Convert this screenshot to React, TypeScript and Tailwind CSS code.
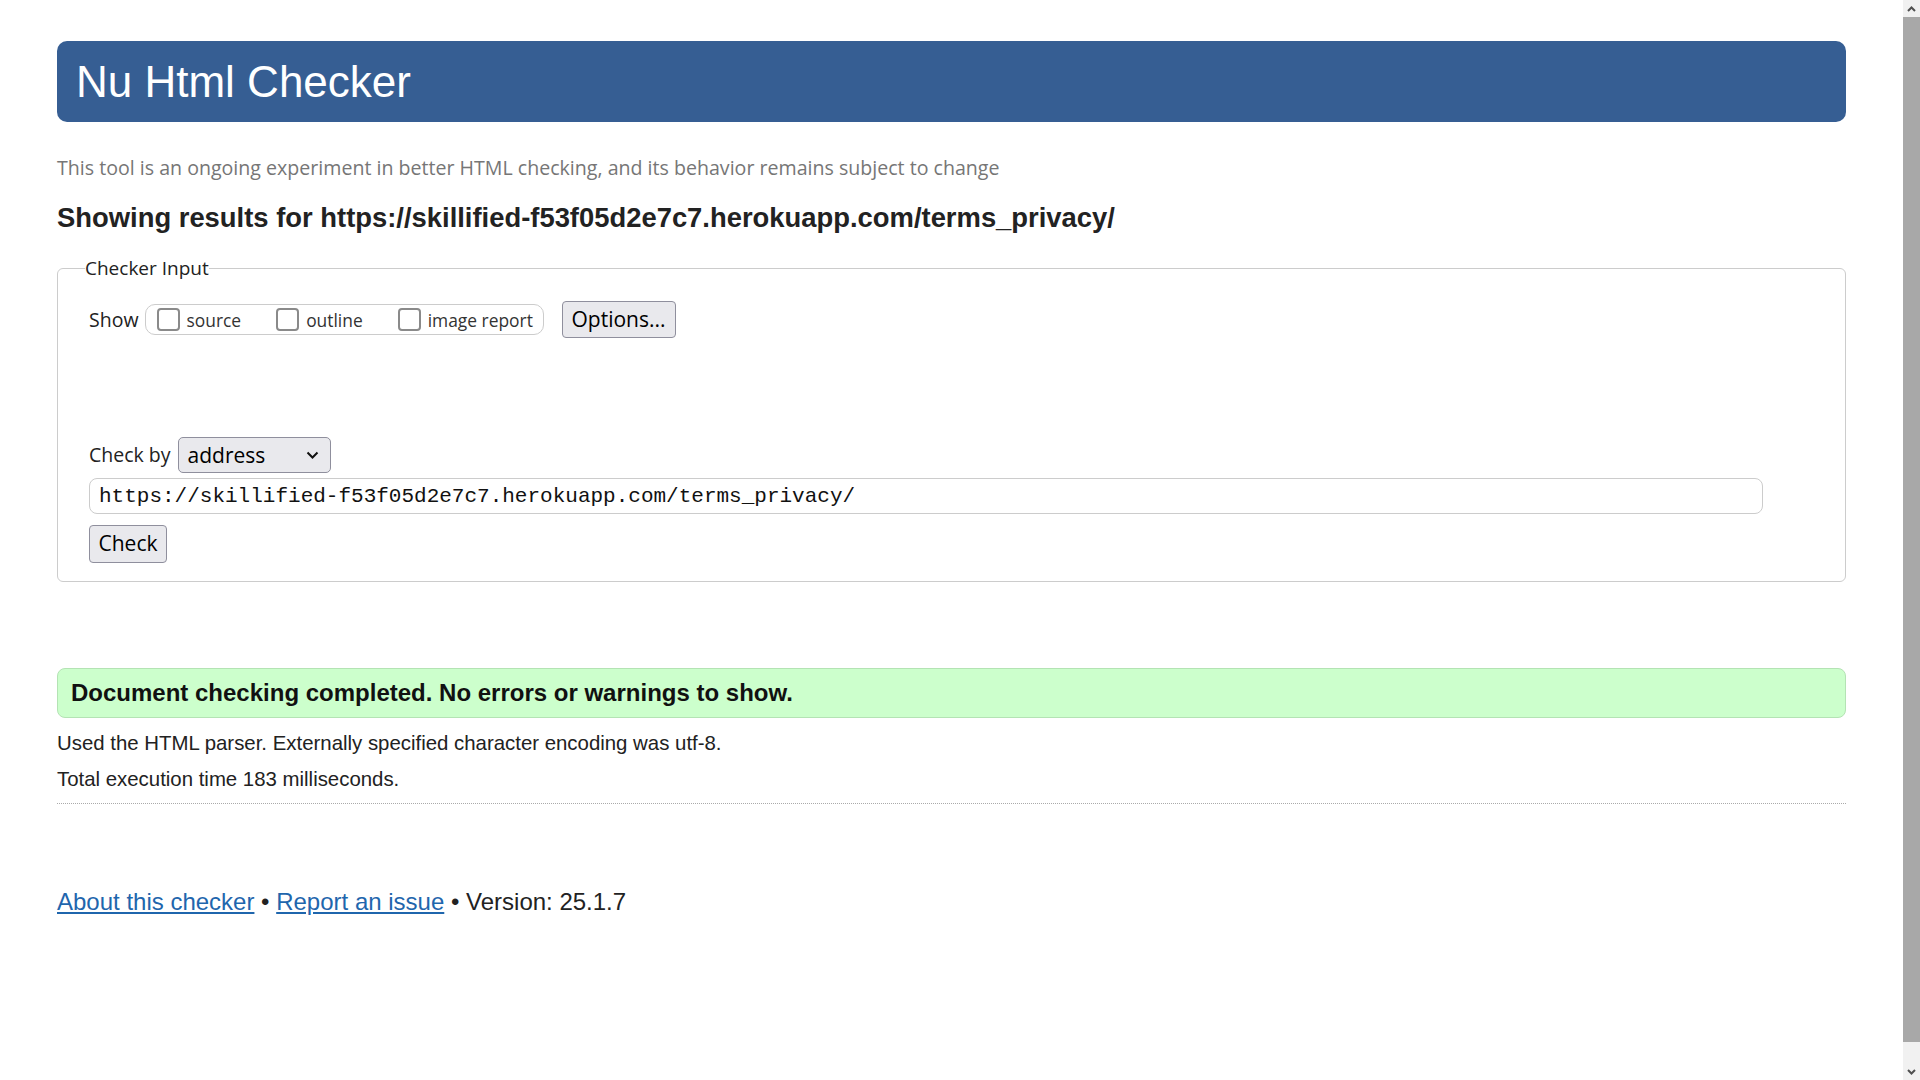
import React from 'react'

const Checkbox = ({ label }: { label: string }) => (
  <label className="flex items-center gap-[7px]">
    <span className="h-[23px] w-[23px] rounded-[4px] border-2 border-[#8a8a8a] bg-white" />
    <span className="text-[17.4px] leading-[24px] text-[#333]">{label}</span>
  </label>
)

const Scrollbar = () => (
  <div className="flex h-screen w-[17px] shrink-0 flex-col bg-[#f1f1f1]">
    <div className="flex h-[17px] items-center justify-center">
      <svg width="9" height="6" viewBox="0 0 9 6">
        <path d="M1 5 L4.5 1.5 L8 5" stroke="#505050" strokeWidth="2" fill="none" />
      </svg>
    </div>
    <div className="flex-1 bg-[#a8a8a8]" />
    <div className="h-[21px]" />
    <div className="flex h-[17px] items-center justify-center">
      <svg width="9" height="6" viewBox="0 0 9 6">
        <path d="M1 1 L4.5 4.5 L8 1" stroke="#505050" strokeWidth="2" fill="none" />
      </svg>
    </div>
  </div>
)

export default function App() {
  return (
    <div className="flex h-screen overflow-hidden bg-white">
      <main className="min-w-0 flex-1 px-[57px] font-['Liberation_Sans',Arial,sans-serif] text-[#222]">
        <header className="mt-[41px] flex h-[81px] items-center rounded-[10px] bg-[#365e93] px-[19px]">
          <h1 className="text-[44px] leading-[44px] text-white">Nu Html Checker</h1>
        </header>

        <p className="mt-[32px] font-['Open_Sans',sans-serif] text-[19.6px] leading-[28px] text-[#767676]">
          This tool is an ongoing experiment in better HTML checking, and its behavior remains subject to change
        </p>

        <h2 className="mt-[20px] text-[27.4px] font-bold leading-[32px]">
          Showing results for https://skillified-f53f05d2e7c7.herokuapp.com/terms_privacy/
        </h2>

        <fieldset className="mt-[21px] rounded-[6px] border border-[#ccc] px-[31px] pb-[18px] font-['Open_Sans',sans-serif]">
          <legend className="ml-[-4px] text-[19px] leading-[26px] text-[#222]">Checker Input</legend>

          <div className="mt-[20px] flex items-center">
            <span className="text-[19.5px] leading-[26px]">Show</span>
            <div className="ml-[6px] flex h-[31px] w-[399px] items-center gap-[35px] rounded-[10px] border border-[#ccc] pl-[11px]">
              <Checkbox label="source" />
              <Checkbox label="outline" />
              <Checkbox label="image report" />
            </div>
            <button className="ml-[18px] h-[37px] w-[114px] rounded-[4px] border border-[#8f8f9d] bg-[#e9e9ed] text-[21px] text-black">
              Options...
            </button>
          </div>

          <div className="mt-[99px] flex items-center">
            <span className="text-[19.5px] leading-[26px]">Check by</span>
            <div className="ml-[7px] flex h-[36px] w-[153px] items-center justify-between rounded-[5px] border border-[#8f8f9d] bg-[#e9e9ed] pl-[9px] pr-[11px]">
              <span className="text-[21px] leading-[28px] text-black">address</span>
              <svg width="13" height="8" viewBox="0 0 13 8">
                <path d="M1.5 1.5 L6.5 6.5 L11.5 1.5" stroke="#111" strokeWidth="2" fill="none" />
              </svg>
            </div>
          </div>

          <div className="mt-[5px] flex h-[36px] w-[1674px] items-center rounded-[8px] border border-[#ccc] pl-[9px] pt-[2px] font-['Liberation_Mono',monospace] text-[21px] text-[#111]">
            https://skillified-f53f05d2e7c7.herokuapp.com/terms_privacy/
          </div>

          <button className="mt-[11px] block h-[38px] w-[78px] rounded-[4px] border border-[#8f8f9d] bg-[#e9e9ed] text-[21px] text-black">
            Check
          </button>
        </fieldset>

        <div className="mt-[86px] flex h-[50px] items-center rounded-[8px] border border-[#b4e3b4] bg-[#ccffcc] px-[13px]">
          <p className="text-[24px] font-bold text-[#111]">Document checking completed. No errors or warnings to show.</p>
        </div>

        <p className="mt-[7px] text-[20.4px] leading-[36px]">
          Used the HTML parser. Externally specified character encoding was utf-8.
        </p>
        <p className="text-[20.4px] leading-[36px]">Total execution time 183 milliseconds.</p>

        <hr className="mt-[6px] border-t border-dotted border-[#aaa]" />

        <p className="mt-[82px] text-[24px] leading-[32px]">
          <a href="#" className="text-[#1f66ad] underline">
            About this checker
          </a>{' '}
          •{' '}
          <a href="#" className="text-[#1f66ad] underline">
            Report an issue
          </a>{' '}
          • Version: 25.1.7
        </p>
      </main>
      <Scrollbar />
    </div>
  )
}
